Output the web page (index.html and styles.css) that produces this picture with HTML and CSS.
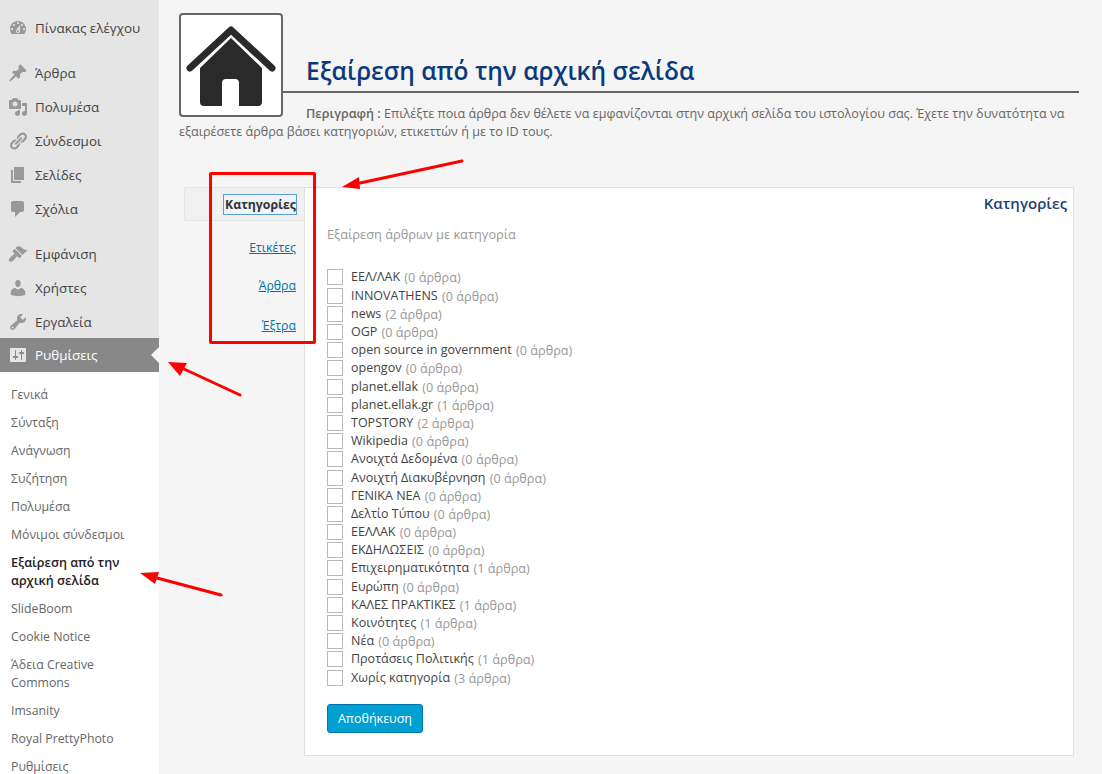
FILE: index.html
```html
<!DOCTYPE html>
<html>

	<head>
		<meta charset="UTF-8">
		<title>Εξαίρεση από την αρχική σελίδα</title>
		<link rel="stylesheet" href="styles.css">
	</head>

	<body>
		<div class="page">
			<div class="sidebar">
				<ul class="menu">
					<li class="first"><svg viewBox="0 0 20 20"><path d="M3.76 16h12.48c1.1-1.37 1.76-3.11 1.76-5 0-4.42-3.58-8-8-8s-8 3.58-8 8c0 1.89.66 3.63 1.76 5zM10 4c.55 0 1 .45 1 1s-.45 1-1 1-1-.45-1-1 .45-1 1-1zM6 6c.55 0 1 .45 1 1s-.45 1-1 1-1-.45-1-1 .45-1 1-1zm8 0c.55 0 1 .45 1 1s-.45 1-1 1-1-.45-1-1 .45-1 1-1zm-5.37 5.55L12 7v6c0 1.1-.9 2-2 2s-2-.9-2-2c0-.57.24-1.08.63-1.45zM4 10c.55 0 1 .45 1 1s-.45 1-1 1-1-.45-1-1 .45-1 1-1zm12 0c.55 0 1 .45 1 1s-.45 1-1 1-1-.45-1-1 .45-1 1-1zm-5 3c0-.55-.45-1-1-1s-1 .45-1 1 .45 1 1 1 1-.45 1-1z"/></svg>Πίνακας ελέγχου</li>
					<li class="gap"><svg viewBox="0 0 20 20"><path d="M10.44 3.02l1.82-1.82 6.36 6.35-1.83 1.82c-1.05-.68-2.48-.57-3.41.36l-.75.75c-.92.93-1.04 2.35-.35 3.41l-1.83 1.82-2.41-2.41-2.8 2.79c-.42.42-3.38 2.71-3.8 2.29s1.86-3.39 2.28-3.81l2.79-2.79L4.1 9.36l1.83-1.82c1.05.69 2.48.57 3.4-.36l.75-.75c.93-.92 1.05-2.35.36-3.41z"/></svg>Άρθρα</li>
					<li><svg viewBox="0 0 20 20"><path d="M13 11V4c0-.55-.45-1-1-1h-1.67L9 1H5L3.67 3H2c-.55 0-1 .45-1 1v7c0 .55.45 1 1 1h10c.55 0 1-.45 1-1zM7 4.5c1.38 0 2.5 1.12 2.5 2.5S8.38 9.5 7 9.5 4.5 8.38 4.5 7 5.62 4.5 7 4.5zM14 6h5v10.5c0 1.38-1.12 2.5-2.5 2.5S14 17.88 14 16.5s1.12-2.5 2.5-2.5c.17 0 .34.02.5.05V9h-3V6zm-4 8.05V13h2v3.5c0 1.38-1.12 2.5-2.5 2.5S7 17.88 7 16.5 8.12 14 9.5 14c.17 0 .34.02.5.05z"/></svg>Πολυμέσα</li>
					<li><svg viewBox="0 0 20 20"><path d="M17.74 2.76c1.68 1.69 1.68 4.41 0 6.1l-1.53 1.52c-1.12 1.12-2.7 1.47-4.14 1.09l2.62-2.61.76-.77.76-.76c.84-.84.84-2.2 0-3.04-.84-.85-2.2-.85-3.04 0l-.77.76-3.38 3.38c-.37-1.44-.02-3.02 1.1-4.14l1.52-1.53c1.69-1.68 4.42-1.68 6.1 0zM8.59 13.43l5.34-5.34c.42-.42.42-1.1 0-1.52-.44-.43-1.13-.39-1.53 0l-5.33 5.34c-.42.42-.42 1.1 0 1.52.44.43 1.13.39 1.52 0zm-.76 2.29l4.14-4.15c.38 1.44.03 3.02-1.09 4.14l-1.52 1.53c-1.69 1.68-4.41 1.68-6.1 0-1.68-1.68-1.68-4.42 0-6.1l1.53-1.52c1.12-1.12 2.7-1.47 4.14-1.1l-4.14 4.15c-.85.84-.85 2.2 0 3.05.84.84 2.2.84 3.04 0z"/></svg>Σύνδεσμοι</li>
					<li><svg viewBox="0 0 20 20"><path d="M6 15V2h10v13H6zm-1 1h8v2H3V5h2v11z"/></svg>Σελίδες</li>
					<li><svg viewBox="0 0 20 20"><path d="M5 2h9c1.1 0 2 .9 2 2v7c0 1.1-.9 2-2 2h-2l-5 5v-5H5c-1.1 0-2-.9-2-2V4c0-1.1.9-2 2-2z"/></svg>Σχόλια</li>
					<li class="gap"><svg viewBox="0 0 20 20"><path d="M14.48 11.06L7.41 3.99l1.5-1.5c.5-.56 2.3-.47 3.51.32 1.21.8 1.43 1.28 2.91 2.1 1.18.64 2.45 1.26 4.45.85zm-.71.71L6.7 4.7 4.93 6.47c-.39.39-.39 1.02 0 1.41l1.06 1.06c.39.39.39 1.03 0 1.42-.6.6-1.43 1.11-2.21 1.69-.35.26-.7.53-1.01.84C1.43 13.71 0 16.24 1.12 17.36c1.11 1.11 3.65-.31 4.79-1.46.31-.31.58-.66.84-1.01.58-.78 1.09-1.61 1.69-2.21.39-.39 1.03-.39 1.42 0l1.06 1.06c.39.39 1.02.39 1.41 0z"/></svg>Εμφάνιση</li>
					<li><svg viewBox="0 0 20 20"><path d="M10 9.25c-2.27 0-2.73-3.44-2.73-3.44C7 4.02 7.82 2 9.97 2c2.16 0 2.98 2.02 2.71 3.81 0 0-.41 3.44-2.68 3.44zm0 2.57L12.72 10c2.39 0 4.52 2.33 4.52 4.53v2.49s-3.65 1.13-7.24 1.13c-3.65 0-7.24-1.13-7.24-1.13v-2.49c0-2.25 1.94-4.48 4.47-4.48z"/></svg>Χρήστες</li>
					<li><svg viewBox="0 0 20 20"><path d="M16.68 9.77c-1.34 1.34-3.3 1.67-4.95.99l-5.41 6.52c-.99.99-2.59.99-3.58 0s-.99-2.59 0-3.57l6.52-5.42c-.68-1.65-.35-3.61.99-4.95 1.28-1.28 3.12-1.62 4.72-1.06l-2.89 2.89 2.82 2.82 2.86-2.87c.53 1.58.18 3.39-1.08 4.65zM3.81 16.21c.4.39 1.04.39 1.43 0 .4-.4.4-1.04 0-1.43-.39-.4-1.03-.4-1.43 0-.39.39-.39 1.03 0 1.43z"/></svg>Εργαλεία</li>
					<li class="active"><svg viewBox="0 0 20 20"><path d="M18 16V4c0-.55-.45-1-1-1H3c-.55 0-1 .45-1 1v12c0 .55.45 1 1 1h14c.55 0 1-.45 1-1zM8 11h1c.55 0 1 .45 1 1s-.45 1-1 1H8v1.5c0 .28-.22.5-.5.5s-.5-.22-.5-.5V13H6c-.55 0-1-.45-1-1s.45-1 1-1h1V5.5c0-.28.22-.5.5-.5s.5.22.5.5V11zm5-2h-1c-.55 0-1-.45-1-1s.45-1 1-1h1V5.5c0-.28.22-.5.5-.5s.5.22.5.5V7h1c.55 0 1 .45 1 1s-.45 1-1 1h-1v5.5c0 .28-.22.5-.5.5s-.5-.22-.5-.5V9z"/></svg>Ρυθμίσεις</li>
				</ul>
				<ul class="submenu">
					<li>Γενικά</li>
					<li>Σύνταξη</li>
					<li>Ανάγνωση</li>
					<li>Συζήτηση</li>
					<li>Πολυμέσα</li>
					<li>Μόνιμοι σύνδεσμοι</li>
					<li class="current">Εξαίρεση από την αρχική σελίδα</li>
					<li>SlideBoom</li>
					<li>Cookie Notice</li>
					<li>Άδεια Creative Commons</li>
					<li>Imsanity</li>
					<li>Royal PrettyPhoto</li>
					<li>Ρυθμίσεις</li>
				</ul>
			</div>

			<div class="main">
				<div class="head">
					<div class="logo">
						<svg viewBox="0 0 100 100" width="100" height="100">
							<path class="roof" d="M9 53 L50 15 L91 53"/>
							<path class="house" d="M50 23 L81 53 V87 Q81 91 77 91 H58 V68 Q58 64 54 64 H45 Q41 64 41 68 V91 H23 Q19 91 19 87 V53 Z"/>
						</svg>
					</div>
					<h2>Εξαίρεση από την αρχική σελίδα</h2>
					<p class="desc"><b>Περιγραφή :</b> Επιλέξτε ποια άρθρα δεν θέλετε να εμφανίζονται στην αρχική σελίδα του ιστολογίου σας. Έχετε την δυνατότητα να εξαιρέσετε άρθρα βάσει κατηγοριών, ετικεττών ή με το ID τους.</p>
				</div>

				<div class="tabs">
					<ul class="tabList">
						<li class="on"><a href="##">Κατηγορίες</a></li>
						<li><a href="##">Ετικέτες</a></li>
						<li class="mid"><a href="##">Άρθρα</a></li>
						<li class="end"><a href="##">Έξτρα</a></li>
					</ul>
					<div class="panel">
						<h3>Κατηγορίες</h3>
						<p class="hint">Εξαίρεση άρθρων με κατηγορία</p>
						<ul class="cats">
							<li><i></i>ΕΕΛ/ΛΑΚ <span>(0 άρθρα)</span></li>
							<li><i></i>INNOVATHENS <span>(0 άρθρα)</span></li>
							<li><i></i>news <span>(2 άρθρα)</span></li>
							<li><i></i>OGP <span>(0 άρθρα)</span></li>
							<li><i></i>open source in government <span>(0 άρθρα)</span></li>
							<li><i></i>opengov <span>(0 άρθρα)</span></li>
							<li><i></i>planet.ellak <span>(0 άρθρα)</span></li>
							<li><i></i>planet.ellak.gr <span>(1 άρθρα)</span></li>
							<li><i></i>TOPSTORY <span>(2 άρθρα)</span></li>
							<li><i></i>Wikipedia <span>(0 άρθρα)</span></li>
							<li><i></i>Ανοιχτά Δεδομένα <span>(0 άρθρα)</span></li>
							<li><i></i>Ανοιχτή Διακυβέρνηση <span>(0 άρθρα)</span></li>
							<li><i></i>ΓΕΝΙΚΑ ΝΕΑ <span>(0 άρθρα)</span></li>
							<li><i></i>Δελτίο Τύπου <span>(0 άρθρα)</span></li>
							<li><i></i>ΕΕΛΛΑΚ <span>(0 άρθρα)</span></li>
							<li><i></i>ΕΚΔΗΛΩΣΕΙΣ <span>(0 άρθρα)</span></li>
							<li><i></i>Επιχειρηματικότητα <span>(1 άρθρα)</span></li>
							<li><i></i>Ευρώπη <span>(0 άρθρα)</span></li>
							<li><i></i>ΚΑΛΕΣ ΠΡΑΚΤΙΚΕΣ <span>(1 άρθρα)</span></li>
							<li><i></i>Κοινότητες <span>(1 άρθρα)</span></li>
							<li><i></i>Νέα <span>(0 άρθρα)</span></li>
							<li><i></i>Προτάσεις Πολιτικής <span>(1 άρθρα)</span></li>
							<li><i></i>Χωρίς κατηγορία <span>(3 άρθρα)</span></li>
						</ul>
						<button class="save">Αποθήκευση</button>
					</div>
				</div>
			</div>
		</div>

		<div class="redBox"></div>
		<svg class="arrows" width="1102" height="774" viewBox="0 0 1102 774">
			<path d="M462 161 L360 183 M240 395 L184 369 M221 595 L157 578"/>
			<polygon points="342,187 359,177 360,189"/>
			<polygon points="168,362 187,363 180,376"/>
			<polygon points="140,573 159,572 155,584"/>
		</svg>
	</body>

</html>
```

FILE: styles.css
```css
* {
	margin: 0;
	padding: 0;
	list-style: none;
	box-sizing: border-box;
}

html,
body {
	height: 774px;
	overflow: hidden;
}

body {
	background: #f5f5f5;
	font-family: "Open Sans", "Noto Sans", sans-serif;
	font-size: 12px;
	color: #444;
	position: relative;
}

.page {
	display: flex;
	height: 774px;
}

/*左侧菜单*/

.sidebar {
	width: 159px;
	flex: none;
	background: #fff;
}

.menu {
	background: #e5e5e5;
	padding-top: 11px;
}

.menu li {
	display: flex;
	align-items: center;
	height: 34px;
	font-size: 13.4px;
	color: #444;
	position: relative;
}

.menu li.gap {
	margin-top: 11px;
}

.menu svg {
	width: 20px;
	height: 20px;
	margin: 0 7px 0 8px;
	fill: #999;
	flex: none;
}

.menu li.active {
	background: #888;
	color: #fff;
	margin-top: -1px;
}

.menu li.active svg {
	fill: #e5e5e5;
}

.menu li.active:after {
	content: "";
	position: absolute;
	right: 0;
	top: 50%;
	margin-top: -8px;
	border: 8px solid transparent;
	border-right-color: #f5f5f5;
	border-left-width: 0;
}

.submenu {
	padding-top: 9px;
}

.submenu li {
	padding: 5px 11px;
	line-height: 18px;
	font-size: 12.3px;
	color: #666;
}

.submenu li.current {
	color: #222;
	font-size: 12.6px;
	font-weight: 600;
}

/*右侧内容*/

.main {
	flex: 1;
	padding: 13px 23px 0 20px;
}

.head {
	height: 174px;
}

.logo {
	float: left;
	width: 104px;
	height: 104px;
	margin-right: 23px;
	background: #fff;
	border: 2px solid #666;
	border-radius: 4px;
}

.logo svg {
	display: block;
}

.roof {
	fill: none;
	stroke: #2a2a2a;
	stroke-width: 7;
	stroke-linecap: round;
	stroke-linejoin: round;
}

.house {
	fill: #2a2a2a;
}

.head h2 {
	font-size: 24.5px;
	font-weight: 600;
	line-height: 33px;
	color: #0a3a7d;
	padding-top: 41px;
	border-bottom: 2px solid #666;
	height: 80px;
}

.desc {
	line-height: 18px;
	padding-top: 12px;
	font-size: 12.6px;
	color: #666;
}

.desc b {
	font-weight: 600;
}

.tabs {
	display: flex;
	margin: 0 5px;
	height: 569px;
}

.tabList {
	width: 120px;
	flex: none;
	text-align: right;
	font-size: 12.3px;
}

.tabList li {
	padding-right: 8px;
	line-height: 18px;
	margin-top: 18px;
}

.tabList li.mid {
	margin-top: 20px;
}

.tabList li.end {
	margin-top: 22px;
}

.tabList li.on {
	margin-top: 0;
	height: 34px;
	line-height: 34px;
	background: #f0f0f0;
	border: 1px solid #e5e5e5;
	border-right: 0;
	border-radius: 3px 0 0 3px;
}

.tabList a {
	color: #0073aa;
}

.tabList li.on a {
	color: #333;
	font-weight: 700;
	text-decoration: none;
	background: #eef4fa;
	outline: 1px solid #5b9dd9;
	padding: 1px 0 1px 1px;
}

.panel {
	flex: 1;
	background: #fff;
	border: 1px solid #e0e0e0;
	padding: 0 6px 0 22px;
}

.panel h3 {
	font-size: 15px;
	font-weight: 600;
	line-height: 20px;
	text-align: right;
	color: #1c3f74;
	padding-top: 5px;
}

.hint {
	color: #999;
	font-size: 12.8px;
	line-height: 18px;
	margin-top: 12px;
}

.cats {
	margin-top: 25.4px;
	font-size: 12.5px;
}

.cats li {
	display: flex;
	align-items: center;
	height: 18.2px;
	line-height: 18px;
	white-space: pre;
}

.cats i {
	width: 16px;
	height: 16px;
	background: #fff;
	border: 1px solid #b4b9be;
	margin-right: 8px;
	flex: none;
}

.cats span {
	color: #999;
	margin-left: 1px;
	font-size: 12.7px;
}

.save {
	display: block;
	margin-top: 17px;
	width: 96px;
	height: 29px;
	background: #00a0d2;
	border: 1px solid #0073aa;
	border-radius: 3px;
	color: #fff;
	font-family: inherit;
	font-size: 12.5px;
}

/*标注*/

.redBox {
	position: absolute;
	left: 209px;
	top: 172px;
	width: 107px;
	height: 172px;
	border: 3px solid #f00;
	border-radius: 2px;
}

.arrows {
	position: absolute;
	left: 0;
	top: 0;
}

.arrows path {
	fill: none;
	stroke: #f00;
	stroke-width: 3;
	stroke-linecap: round;
}

.arrows polygon {
	fill: #f00;
}
```
